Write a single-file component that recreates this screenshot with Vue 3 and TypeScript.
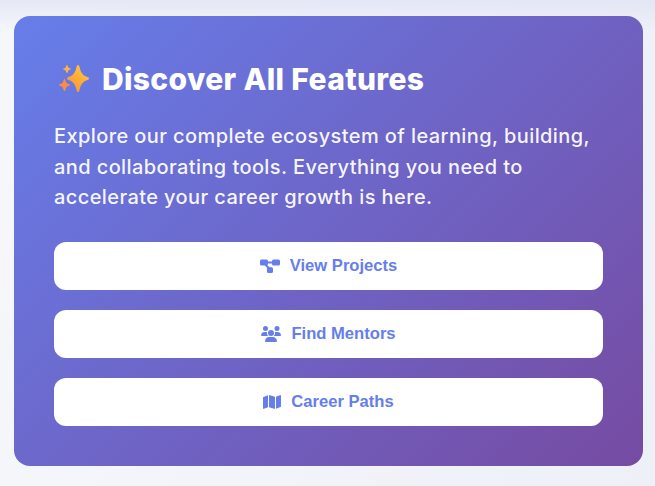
<script setup lang="ts">
interface LinkItem {
  label: string
  viewBox: string
  path: string
  wide: boolean
}

const links: LinkItem[] = [
  {
    label: 'View Projects',
    viewBox: '0 0 20 16',
    wide: true,
    path: 'M1.5 1.5h5A1.5 1.5 0 0 1 8 3v.4h4V3a1.5 1.5 0 0 1 1.5-1.5h5A1.5 1.5 0 0 1 20 3v3a1.5 1.5 0 0 1-1.500 1.500h-5A1.500 1.500 0 0 1 12 6v-.6H8V6c0 .6-.3 1-.7 1.300L9.800 9.300h1.700A1.500 1.500 0 0 1 13 10.800v2.700a1.500 1.500 0 0 1-1.500 1.500h-3A1.500 1.500 0 0 1 7 13.500v-2.700c0-.3 0-.5.2-.7L4.800 7.500H1.500A1.500 1.500 0 0 1 0 6V3a1.500 1.500 0 0 1 1.500-1.500z'
  },
  {
    label: 'Find Mentors',
    viewBox: '0 0 640 512',
    wide: true,
    path: 'M144 0a80 80 0 1 1 0 160A80 80 0 1 1 144 0zM512 0a80 80 0 1 1 0 160A80 80 0 1 1 512 0zM0 298.7C0 239.8 47.8 192 106.7 192h42.7c15.9 0 31 3.5 44.6 9.7c-1.3 7.2-1.9 14.7-1.9 22.3c0 38.2 16.8 72.5 43.3 96c-.2 0-.4 0-.7 0H21.3C9.6 320 0 310.4 0 298.7zM405.3 320c-.2 0-.4 0-.7 0c26.6-23.5 43.3-57.8 43.3-96c0-7.6-.7-15-1.9-22.3c13.6-6.3 28.7-9.7 44.6-9.7h42.7C592.2 192 640 239.8 640 298.7c0 11.8-9.6 21.3-21.3 21.3H405.3zM224 224a96 96 0 1 1 192 0 96 96 0 1 1 -192 0zM128 485.3C128 411.7 187.7 352 261.3 352H378.7C452.3 352 512 411.7 512 485.3c0 14.7-11.9 26.7-26.7 26.7H154.7c-14.7 0-26.7-11.9-26.7-26.7z'
  },
  {
    label: 'Career Paths',
    viewBox: '0 0 576 512',
    wide: false,
    path: 'M384 476.1L192 421.2V35.9L384 90.8V476.1zm32-1.2V88.4L543.1 37.5c15.8-6.3 32.9 5.3 32.9 22.3V394.6c0 9.8-6 18.6-15.1 22.3L416 474.8zM15.1 95.1L160 37.2V423.6L32.9 474.5C17.1 480.8 0 469.2 0 452.2V117.4c0-9.8 6-18.6 15.1-22.3z'
  }
]
</script>

<template>
  <div class="page">
    <section class="card">
      <h2 class="title">
        <svg class="sparkles" viewBox="0 0 32 32" aria-hidden="true">
          <defs>
            <linearGradient id="spark" x1="0.8" y1="0.1" x2="0.2" y2="1">
              <stop offset="0" stop-color="#ffc637" />
              <stop offset="1" stop-color="#fc8f3a" />
            </linearGradient>
          </defs>
          <path fill="url(#spark)" d="M20 2Q21 2 21.400 3.500C22.600 9.500 24.600 12.500 30 14.300Q31 14.800 31 15.500Q31 16.200 30 16.700C24.600 18.500 22.600 21.500 21.400 27.500Q21 29 20 29Q19 29 18.600 27.500C17.400 21.500 15.400 18.500 10 16.700Q9 16.200 9 15.500Q9 14.800 10 14.300C15.400 12.500 17.400 9.500 18.600 3.500Q19 2 20 2Z" />
          <path fill="#fdb342" d="M9 2Q9.500 2 9.700 2.700C10.200 4.500 11 5.200 12.500 5.500Q13 5.700 13 6Q13 6.300 12.500 6.500C11 6.800 10.200 7.500 9.700 9.300Q9.500 10 9 10Q8.500 10 8.300 9.300C7.800 7.500 7 6.800 5.500 6.500Q5 6.300 5 6Q5 5.700 5.500 5.500C7 5.200 7.800 4.500 8.300 2.700Q8.500 2 9 2Z" />
          <path fill="#fa8c48" d="M6.500 16Q7.100 16 7.400 17C8 19.700 8.900 20.700 11.300 21.300Q12 21.600 12 22Q12 22.400 11.300 22.700C8.900 23.300 8 24.300 7.400 27Q7.100 28 6.500 28Q5.900 28 5.600 27C5 24.300 4.100 23.300 1.700 22.700Q1 22.400 1 22Q1 21.600 1.700 21.300C4.100 20.700 5 19.700 5.600 17Q5.900 16 6.500 16Z" />
        </svg>
        <span>Discover All Features</span>
      </h2>
      <p class="intro">
        Explore our complete ecosystem of learning, building, and collaborating tools. Everything you need to accelerate your career growth is here.
      </p>
      <div class="actions">
        <a v-for="link in links" :key="link.label" class="action" href="#">
          <svg class="icon" :class="{ wide: link.wide }" :viewBox="link.viewBox" aria-hidden="true">
            <path fill="currentColor" :d="link.path" />
          </svg>
          <span>{{ link.label }}</span>
        </a>
      </div>
    </section>
  </div>
</template>

<style>
html,
body {
  margin: 0;
  background: #f3f5fa;
}
</style>

<style scoped>
.page {
  box-sizing: border-box;
  height: 486px;
  padding: 16px 12px 20px 14px;
  overflow: hidden;
  background:
    linear-gradient(180deg, rgba(222, 226, 243, 0.7) 0, rgba(222, 226, 243, 0) 32px),
    linear-gradient(100deg, #f6f7fb 0%, #edf0f7 100%);
}

.card {
  box-sizing: border-box;
  height: 450px;
  padding: 40px;
  border-radius: 16px;
  background: linear-gradient(135deg, #667eea 0%, #764ba2 100%);
  color: #fff;
}

.title {
  display: flex;
  align-items: center;
  gap: 12px;
  margin: 1px 0 0 4px;
  font-family: Inter, "Liberation Sans", sans-serif;
  font-size: 30px;
  font-weight: 800;
  line-height: 44px;
  letter-spacing: 0.33px;
}

.sparkles {
  width: 32px;
  height: 32px;
  flex: none;
}

.intro {
  margin: 20px 0 0;
  font-family: Inter, "Liberation Sans", sans-serif;
  font-size: 20px;
  font-weight: 500;
  line-height: 30.7px;
  letter-spacing: 0.4px;
  color: rgba(255, 255, 255, 0.95);
}

.actions {
  display: flex;
  flex-direction: column;
  gap: 20px;
  margin-top: 29px;
}

.action {
  display: flex;
  align-items: center;
  justify-content: center;
  gap: 10px;
  height: 48px;
  border-radius: 12px;
  background: #fff;
  color: #667eea;
  font-family: "Liberation Sans", Arial, sans-serif;
  font-size: 16.6px;
  font-weight: 700;
  text-decoration: none;
}

.icon {
  width: 18px;
  height: 16px;
  flex: none;
}

.icon.wide {
  width: 20px;
}
</style>
